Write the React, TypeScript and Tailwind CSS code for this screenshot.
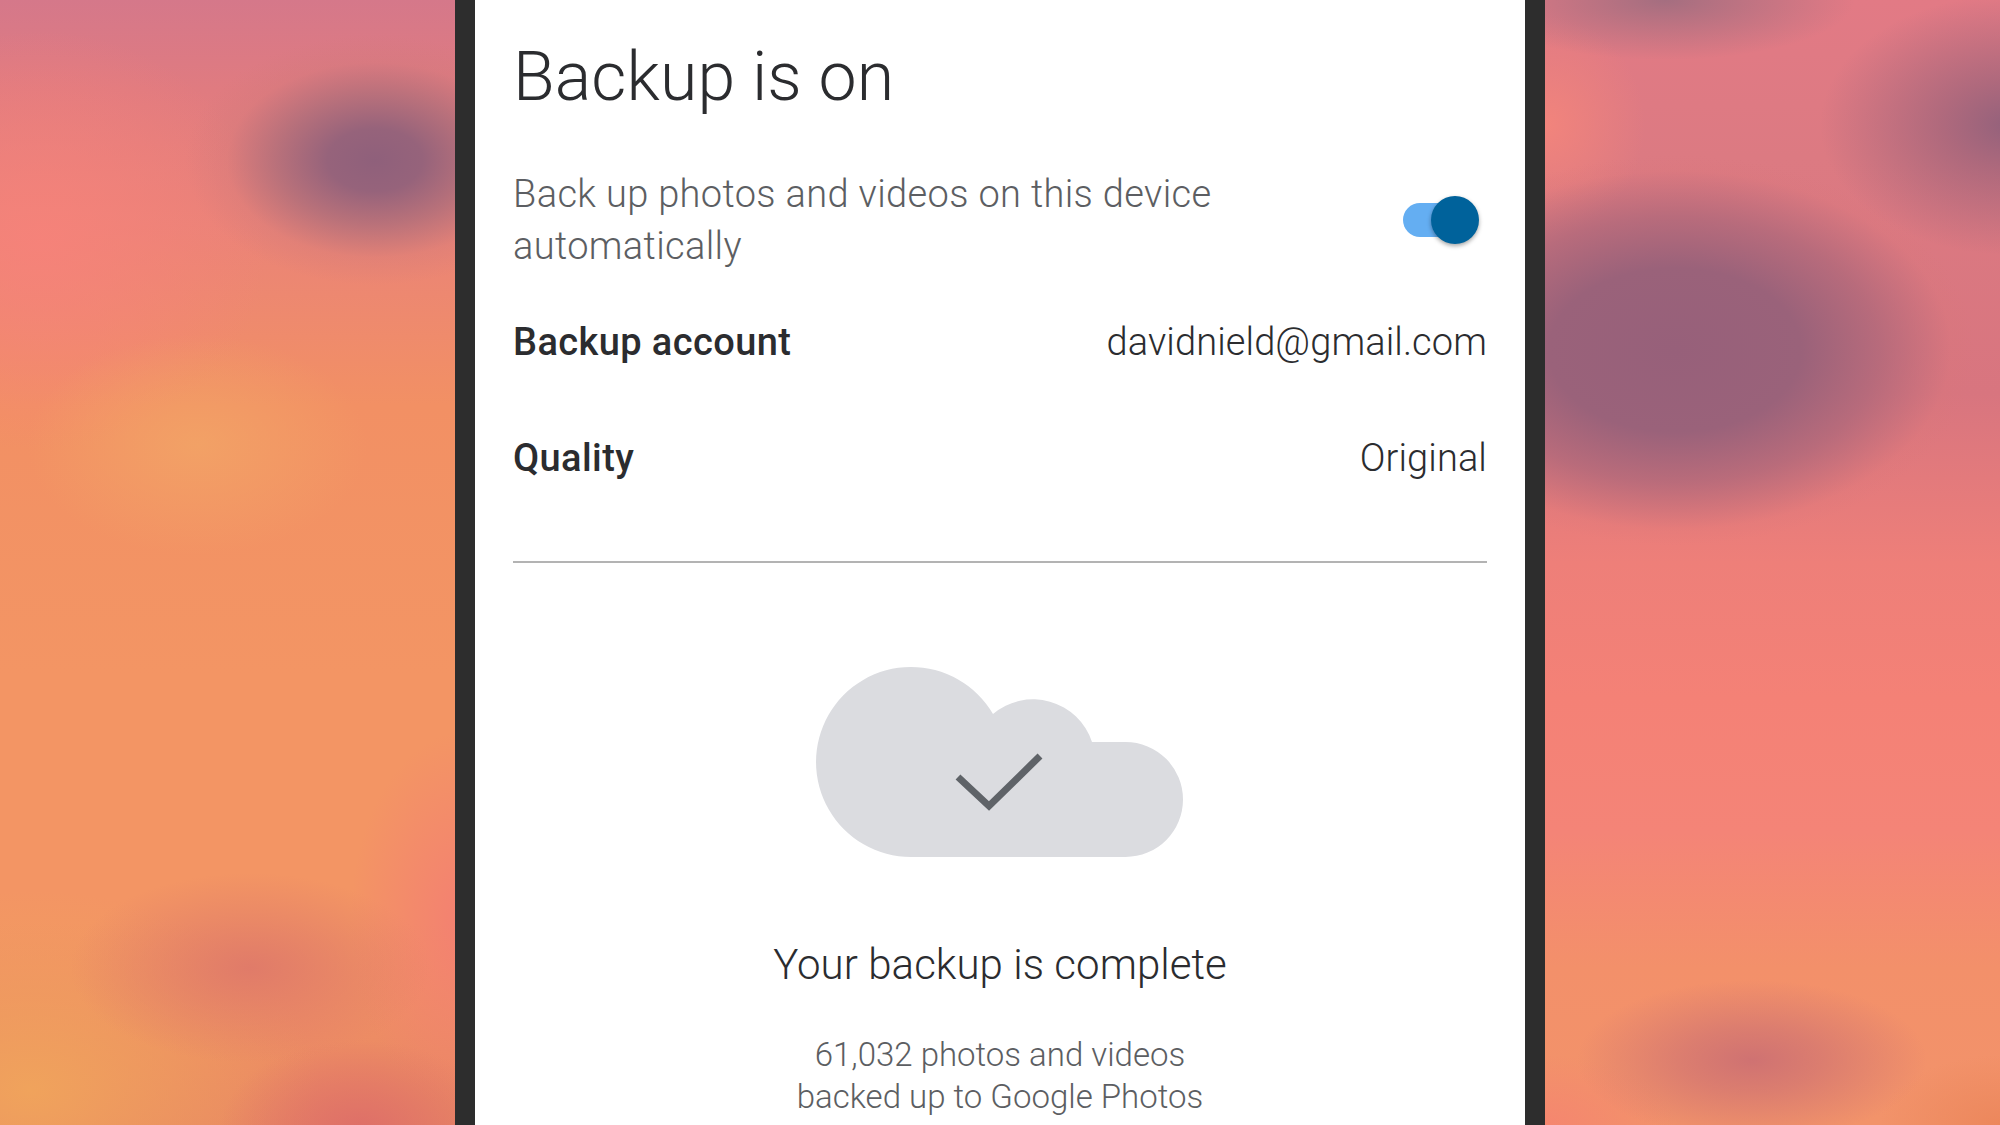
const leftBg =
  "bg-[radial-gradient(ellipse_190px_125px_at_375px_160px,#8f607b_0%,#96637b_25%,rgba(170,108,122,0.75)_52%,rgba(205,120,122,0.3)_78%,rgba(220,125,125,0)_100%),radial-gradient(ellipse_170px_110px_at_197px_445px,rgba(242,163,102,0.9)_0%,rgba(242,163,102,0)_100%),radial-gradient(ellipse_180px_95px_at_250px_968px,#e07b69_0%,rgba(224,123,105,0)_100%),radial-gradient(ellipse_140px_90px_at_360px_1130px,#de6f68_0%,rgba(222,111,104,0)_100%),radial-gradient(ellipse_290px_200px_at_30px_1090px,#f0a35c_0%,rgba(240,163,92,0)_100%),radial-gradient(ellipse_120px_190px_at_470px_920px,#f37f72_0%,rgba(243,127,114,0)_100%),radial-gradient(ellipse_230px_210px_at_40px_240px,rgba(247,130,122,0.85)_0%,rgba(249,131,122,0)_100%),linear-gradient(180deg,#d5788a_0%,#e07b80_8%,#ea8378_20%,#f29064_36%,#f39564_60%,#f39564_82%,#e88564_100%)]";

const rightBg =
  "bg-[radial-gradient(ellipse_300px_195px_at_130px_350px,#97607a_0%,#9a627a_42%,rgba(172,103,122,0.75)_68%,rgba(215,118,122,0.2)_92%,rgba(220,120,120,0)_100%),radial-gradient(ellipse_190px_130px_at_465px_125px,#93617b_0%,rgba(155,98,122,0.7)_35%,rgba(170,105,125,0)_100%),radial-gradient(ellipse_190px_60px_at_120px_0px,#a46e80_0%,rgba(164,110,128,0)_100%),radial-gradient(ellipse_175px_80px_at_207px_1060px,#cf7272_0%,rgba(207,114,114,0.65)_40%,rgba(207,114,114,0)_100%),radial-gradient(ellipse_100px_110px_at_0px_125px,#f2847c_0%,rgba(242,132,124,0)_100%),radial-gradient(ellipse_120px_70px_at_455px_1125px,#ec875c_0%,rgba(236,135,92,0)_100%),radial-gradient(ellipse_130px_70px_at_0px_1125px,#f5866f_0%,rgba(245,134,111,0)_100%),linear-gradient(180deg,#e27a85_0%,#dc7a82_14%,#d8757f_35%,#ee7f79_50%,#f48176_62%,#f48477_74%,#f3906a_86%,#f2936a_100%)]";

function Row({ label, value, className }: { label: string; value: string; className: string }) {
  return (
    <div className={`flex items-center justify-between text-[38px] leading-[48px] text-[#2b2c2f] ${className}`}>
      <span className="font-medium tracking-[0.4px]">{label}</span>
      <span className="font-light tracking-[0.1px]">{value}</span>
    </div>
  );
}

function CloudCheck() {
  return (
    <svg width="367" height="190" viewBox="0 0 367 190" className="block">
      <path
        d="M95 190A95 95 0 1 1 177 47A62 62 0 0 1 276 75H309.5A57.5 57.5 0 0 1 309.5 190Z"
        fill="#dbdce0"
      />
      <path d="M142 110L173 139L224 89" fill="none" stroke="#5f6368" strokeWidth="7" />
    </svg>
  );
}

export default function App() {
  return (
    <div className="flex h-[1125px] w-[2000px] overflow-hidden font-['Roboto',sans-serif]">
      <div className={`w-[455px] shrink-0 ${leftBg}`} />
      <main className="flex w-[1090px] shrink-0 flex-col border-x-[20px] border-[#2d2d2d] bg-white px-[38px]">
        <h1 className="mt-[39px] text-[68px] leading-[76px] font-light tracking-[0.1px] text-[#2b2c2f]">Backup is on</h1>
        <div className="mt-[53px] flex items-center justify-between">
          <p className="w-[760px] text-[38px] leading-[52px] font-light tracking-[0.35px] text-[#5c5e62]">
            Back up photos and videos on this device automatically
          </p>
          <div className="relative mr-[17px] h-[34px] w-[67px] rounded-full bg-[#64aef2]">
            <div className="absolute top-[-7px] right-[-9px] size-[48px] rounded-full bg-[#00629b] shadow-[0_2px_4px_rgba(0,0,0,0.35)]" />
          </div>
        </div>
        <Row label="Backup account" value="davidnield@gmail.com" className="mt-[46px]" />
        <Row label="Quality" value="Original" className="mt-[68px]" />
        <hr className="mt-[79px] border-t-2 border-[#b3b3b3]" />
        <div className="mt-[104px] flex flex-col items-center">
          <div className="-translate-x-px">
            <CloudCheck />
          </div>
          <p className="mt-[84px] text-[42px] leading-[48px] font-light tracking-[0.05px] text-[#2b2c2f]">Your backup is complete</p>
          <p className="mt-[45px] text-center text-[33px] leading-[42px] font-light text-[#5c5e62]">
            61,032 photos and videos
            <br />
            backed up to Google Photos
          </p>
        </div>
      </main>
      <div className={`w-[455px] shrink-0 ${rightBg}`} />
    </div>
  );
}
